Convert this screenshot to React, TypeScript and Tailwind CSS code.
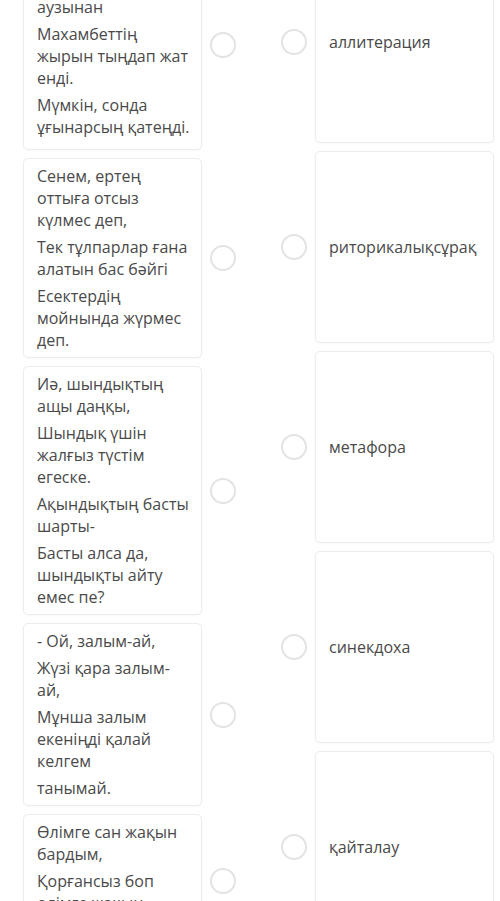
import React from 'react';

const leftItems: string[][][] = [
  [['Жыраулардың'], ['Жыр тыңдадым', 'аузынан'], ['Махамбеттің', 'жырын тыңдап жат', 'енді.'], ['Мүмкін, сонда', 'ұғынарсың қатеңді.']],
  [['Сенем, ертең', 'оттыға отсыз', 'күлмес деп,'], ['Тек тұлпарлар ғана', 'алатын бас бәйгі'], ['Есектердің', 'мойнында жүрмес', 'деп.']],
  [['Иә, шындықтың', 'ащы даңқы,'], ['Шындық үшін', 'жалғыз түстім', 'егеске.'], ['Ақындықтың басты', 'шарты-'], ['Басты алса да,', 'шындықты айту', 'емес пе?']],
  [['- Ой, залым-ай,'], ['Жүзі қара залым-', 'ай,'], ['Мұнша залым', 'екеніңді қалай', 'келгем'], ['танымай.']],
  [['Өлімге сан жақын', 'бардым,'], ['Қорғансыз боп', 'өлімге жақын'], ['бардым.']],
];

const rightItems = ['аллитерация', 'риторикалықсұрақ', 'метафора', 'синекдоха', 'қайталау'];

const Dot = () => (
  <div className="w-[26px] h-[26px] shrink-0 rounded-full border-2 border-[#e3e3e3] bg-white" />
);

const App = () => {
  return (
    <div
      className="w-[500px] h-[901px] overflow-hidden bg-white text-[16px] leading-[22px] text-[#4a4a4a]"
      style={{ fontFamily: '"Open Sans", "Noto Sans", sans-serif' }}
    >
      <div className="flex items-start pl-[23px] -mt-[60px]">
        {/* Left column */}
        <div className="flex flex-col gap-2 w-[208px]">
          {leftItems.map((paras, i) => (
            <div key={i} className="flex items-center gap-2">
              <div
                className={`w-[179px] shrink-0 rounded-[5px] border border-[#ececec] bg-white pl-[13px] pr-[6px] pt-[6px] flex flex-col gap-[5px] whitespace-nowrap shadow-[0_1px_2px_rgba(0,0,0,0.03)] ${
                  i === 0 ? 'pb-[11px]' : 'pb-[6px]'
                }`}
              >
                {paras.map((p, j) => (
                  <p key={j}>
                    {p.map((l, k) => (
                      <span key={k} className="block">{l}</span>
                    ))}
                  </p>
                ))}
              </div>
              <Dot />
            </div>
          ))}
        </div>

        {/* Right column */}
        <div className="flex flex-col gap-2 ml-[50px] mt-px">
          {rightItems.map((t, i) => (
            <div key={i} className="flex items-center gap-2">
              <Dot />
              <div
                className={`w-[179px] shrink-0 rounded-[5px] border border-[#ececec] bg-white px-[13px] flex items-center shadow-[0_1px_2px_rgba(0,0,0,0.03)] ${
                  i === 0 ? 'h-[202px]' : 'h-[192px]'
                }`}
              >
                {t}
              </div>
            </div>
          ))}
        </div>
      </div>
    </div>
  );
};

export default App;
